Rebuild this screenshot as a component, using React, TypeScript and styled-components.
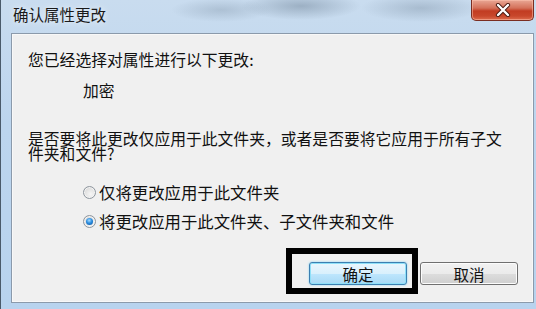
import React from "react";
import styled, { createGlobalStyle } from "styled-components";

const Global = createGlobalStyle`
  html, body { margin: 0; padding: 0; background: #ffffff; }
  body { font-family: "Noto Sans CJK SC", "Noto Sans", sans-serif; }
`;

const Window = styled.div`
  position: relative;
  width: 536px;
  height: 309px;
  box-sizing: border-box;
  padding: 0 2px 6px 10px;
  display: flex;
  flex-direction: column;
  overflow: hidden;
  border-left: 1px solid #4a5a6a;
  background:
    radial-gradient(ellipse 60px 14px at 300px 6px, rgba(120,140,160,0.55), transparent),
    radial-gradient(ellipse 50px 12px at 220px 10px, rgba(140,160,180,0.45), transparent),
    radial-gradient(ellipse 60px 14px at 420px 8px, rgba(120,140,160,0.4), transparent),
    linear-gradient(180deg, #c9dcef 0%, #bcd5ee 40%, #b8d3ee 100%);
`;

const TitleBar = styled.div`
  height: 33px;
  display: flex;
  align-items: flex-start;
  justify-content: space-between;
  margin-left: -9px;
  margin-right: -1px;
`;

const Title = styled.span`
  margin: 5px 0 0 11px;
  font-family: "Noto Sans CJK SC", sans-serif;
  font-size: 15.5px;
  line-height: 18px;
  color: #1a1a1a;
  text-shadow: 0 0 6px rgba(255,255,255,0.9);
`;

const CloseButton = styled.div`
  width: 63px;
  height: 21px;
  margin-right: 1px;
  box-sizing: border-box;
  border: 1px solid #7a2e22;
  border-top: none;
  border-radius: 0 0 5px 5px;
  background: linear-gradient(180deg, #e9a795 0%, #d4715a 40%, #c23c22 55%, #c8472b 80%, #de6c4e 100%);
  box-shadow: inset 0 0 0 1px rgba(255,200,180,0.5);
  display: flex;
  align-items: center;
  justify-content: center;
`;

const Panel = styled.div`
  flex: 1;
  box-sizing: border-box;
  border: 1px solid #8b9aab;
  background: #f0f0f0;
  box-shadow: inset 0 0 0 1px #ffffff80;
  display: flex;
  flex-direction: column;
  padding: 18px 15px 17px 16px;
  color: #111;
  font-size: 15.8px;
`;

const Text = styled.div<{ $mt?: number; $ml?: number; $lh?: number }>`
  margin-top: ${(p) => p.$mt ?? 0}px;
  margin-left: ${(p) => p.$ml ?? 0}px;
  line-height: ${(p) => p.$lh ?? 16}px;
  max-width: 480px;
`;

const RadioRow = styled.label<{ $mt: number }>`
  display: flex;
  align-items: center;
  height: 16px;
  margin-top: ${(p) => p.$mt}px;
  margin-left: 55px;
  line-height: 16px;
  font-size: 16.4px;
`;

const RadioCircle = styled.span<{ $checked?: boolean }>`
  width: 13px;
  height: 13px;
  box-sizing: border-box;
  border-radius: 50%;
  border: 1px solid #8e969e;
  background: radial-gradient(circle at 60% 65%, #f6f6f6 0%, #e2e2e2 55%, #c4c4c4 100%);
  box-shadow: inset 0 0 0 1px #f4f4f4;
  margin-right: 3px;
  margin-top: 1px;
  display: flex;
  align-items: center;
  justify-content: center;
  &::after {
    content: "";
    display: ${(p) => (p.$checked ? "block" : "none")};
    width: 7px;
    height: 7px;
    border-radius: 50%;
    background: radial-gradient(circle at 45% 35%, #a8dcff 0%, #2c8ee0 45%, #0a4f9a 100%);
  }
`;

const ButtonRow = styled.div`
  margin-top: auto;
  display: flex;
  justify-content: flex-end;
  gap: 13px;
`;

const Button = styled.div<{ $default?: boolean }>`
  position: relative;
  width: 98px;
  height: 23px;
  box-sizing: border-box;
  border-radius: 3px;
  border: 1px solid ${(p) => (p.$default ? "#3c7fb1" : "#707070")};
  background: ${(p) =>
    p.$default
      ? "linear-gradient(180deg, #eaf6fd 0%, #d9f0fc 50%, #bee6fd 51%, #a7d9f5 100%)"
      : "linear-gradient(180deg, #f2f2f2 0%, #ebebeb 50%, #dddddd 51%, #cfcfcf 100%)"};
  box-shadow: ${(p) =>
    p.$default
      ? "inset 0 0 0 1px #8ee0f8, 0 0 2px #6fd0f5"
      : "inset 0 0 0 1px #fcfcfc"};
  display: flex;
  align-items: center;
  justify-content: center;
  font-size: 15.5px;
  line-height: 16px;
  color: #111;
`;

const Highlight = styled.div`
  position: absolute;
  left: -24px;
  top: -15px;
  right: -12px;
  bottom: -10px;
  border: 6px solid #000;
  pointer-events: none;
`;

export default function App() {
  return (
    <>
      <Global />
      <Window>
        <TitleBar>
          <Title>确认属性更改</Title>
          <CloseButton>
            <svg width="16" height="14" viewBox="0 0 16 14">
              <path
                d="M3 2 L13 12 M13 2 L3 12"
                stroke="#4a1a12"
                strokeWidth="4.2"
                strokeLinecap="round"
              />
              <path
                d="M3 2 L13 12 M13 2 L3 12"
                stroke="#ffffff"
                strokeWidth="2.4"
                strokeLinecap="round"
              />
            </svg>
          </CloseButton>
        </TitleBar>
        <Panel>
          <Text>您已经选择对属性进行以下更改:</Text>
          <Text $mt={15} $ml={55}>加密</Text>
          <Text $mt={32} $lh={15}>
            是否要将此更改仅应用于此文件夹，或者是否要将它应用于所有子文件夹和文件?
          </Text>
          <RadioRow $mt={23}>
            <RadioCircle />
            仅将更改应用于此文件夹
          </RadioRow>
          <RadioRow $mt={13}>
            <RadioCircle $checked />
            将更改应用于此文件夹、子文件夹和文件
          </RadioRow>
          <ButtonRow>
            <Button $default>
              确定
              <Highlight />
            </Button>
            <Button>取消</Button>
          </ButtonRow>
        </Panel>
      </Window>
    </>
  );
}
